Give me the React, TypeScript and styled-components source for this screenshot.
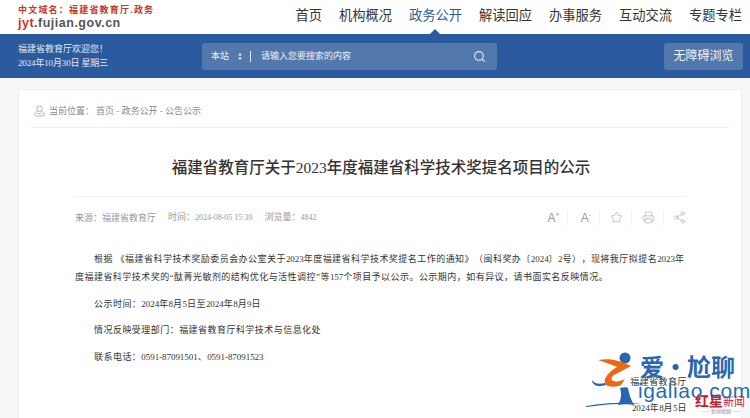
import React from "react";
import styled, { createGlobalStyle } from "styled-components";
import { Search, Star, Printer, Share2 } from "lucide-react";

const serif = `"Liberation Serif", "Noto Sans CJK SC", serif`;
const sans = `"Liberation Sans", "Noto Sans CJK SC", sans-serif`;

const Global = createGlobalStyle`
  html, body { margin: 0; padding: 0; background: #f6f7f8; }
  body { width: 750px; height: 418px; overflow: hidden; font-family: ${serif}; text-spacing-trim: space-all; }
  * { box-sizing: border-box; }
`;

const Page = styled.div`
  position: relative;
  width: 750px;
  height: 418px;
  overflow: hidden;
`;

const TopBar = styled.header`
  height: 34px;
  background: #fff;
  display: flex;
  align-items: flex-start;
  justify-content: space-between;
  padding: 4px 8px 0 18px;
`;

const Logo = styled.div`
  display: flex;
  flex-direction: column;
  margin-top: 1px;
`;

const LogoCn = styled.div`
  font: 700 9px/11px ${sans};
  color: #c8352b;
  letter-spacing: 1.2px;
`;

const LogoEn = styled.div`
  font: 700 12.5px/15px ${sans};
  color: #555;
  letter-spacing: 0.5px;
  b { color: #c8352b; }
`;

const Nav = styled.nav`
  display: flex;
  gap: 17px;
`;

const NavItem = styled.a<{ $active?: boolean }>`
  position: relative;
  display: block;
  height: 30px;
  font: 400 13.25px/24px ${serif};
  color: ${(p) => (p.$active ? "#2b5a9e" : "#333")};
  &::after {
    content: "";
    display: ${(p) => (p.$active ? "block" : "none")};
    position: absolute;
    left: 50%;
    bottom: 0;
    margin-left: -5px;
    border: 5px solid transparent;
    border-top: 0;
    border-bottom: 5px solid #2b5a9e;
  }
`;

const Band = styled.div`
  height: 44px;
  background: #2b5a9e;
  display: flex;
  align-items: center;
  padding: 0 7px 0 18px;
`;

const Welcome = styled.div`
  width: 184px;
  font: 400 9px/14.5px ${serif};
  color: #e4ebf5;
`;

const WelcomeDate = styled.div`
  letter-spacing: -0.15px;
`;

const SearchBox = styled.div`
  width: 295px;
  height: 27px;
  background: #5378ac;
  border-radius: 3px;
  display: flex;
  align-items: center;
  padding: 0 11px 0 9px;
  color: #eef2f8;
  font: 400 9px/12px ${serif};
`;

const Scope = styled.span`
  width: 27px;
`;

const Updown = styled.svg`
  width: 4px;
  height: 7px;
  margin-right: 8px;
`;

const Divider = styled.span`
  width: 1px;
  height: 11px;
  background: #e4ebf5;
  margin-right: 10px;
`;

const Hint = styled.span`
  flex: 1;
`;

const AccessBtn = styled.button`
  margin-left: auto;
  width: 79px;
  height: 27px;
  border: 0;
  border-radius: 3px;
  background: #5378ac;
  color: #eef2f8;
  font: 400 12px/27px ${serif};
  padding: 0;
`;

const Card = styled.main`
  margin: 11px 8px 0 18px;
  background: #fff;
  border: 1px solid #eef0f2;
  border-bottom: 0;
  height: 340px;
  padding: 0 12px;
`;

const Crumbs = styled.div`
  height: 38px;
  display: flex;
  align-items: center;
  border-bottom: 1px solid #eeeeee;
  padding: 5px 0 0 3px;
  font: 400 9px/12px ${serif};
  color: #8a8a8a;
`;

const CrumbIcon = styled.svg`
  width: 11px;
  height: 12px;
  margin-right: 4px;
`;

const CrumbLabel = styled.span`
  width: 47px;
`;

const Article = styled.article`
  padding: 0 42px 0 44px;
`;

const Title = styled.h1`
  margin: 0;
  height: 69px;
  border-bottom: 1px solid #f0f0f0;
  font: 500 15.5px/79px ${serif};
  color: #333;
  text-align: center;
  white-space: nowrap;
`;

const MetaRow = styled.div`
  height: 41px;
  display: flex;
  align-items: center;
  font: 400 9px/12px ${serif};
  color: #999;
`;

const MetaItem = styled.span`
  margin-right: 12px;
`;

const MetaNum = styled.span`
  font-size: 8px;
`;

const Tools = styled.div`
  margin-left: auto;
  display: flex;
  align-items: center;
  color: #9a9a9a;
`;

const Tool = styled.span<{ $first?: boolean; $text?: boolean }>`
  display: flex;
  align-items: center;
  justify-content: center;
  width: 32px;
  height: 14px;
  padding-left: ${(p) => (p.$text ? 5 : 2)}px;
  border-left: ${(p) => (p.$first ? "0" : "1px solid #f0f0f0")};
  font: 400 12px/14px ${sans};
  &:last-child {
    width: 24px;
    justify-content: flex-start;
    padding-left: 9px;
  }
  sup {
    font-size: 7px;
    line-height: 7px;
    align-self: flex-start;
  }
`;

const Body = styled.div`
  padding-top: 12px;
  font: 400 9px/18px ${serif};
  letter-spacing: 0.46px;
  color: #333;
`;

const Para = styled.p<{ $gap?: number }>`
  margin: 0 0 ${(p) => p.$gap ?? 8.5}px;
  text-indent: 19px;
`;

const Num = styled.span`
  letter-spacing: -0.05px;
`;

const Sign = styled.p<{ $gap?: number }>`
  margin: 0 0 ${(p) => p.$gap ?? 0}px;
  text-align: right;
`;

const Mark = styled.div`
  position: absolute;
  right: 0;
  bottom: 0;
  width: 230px;
  height: 78px;
  pointer-events: none;
`;

const MarkSvg = styled.svg`
  position: absolute;
  inset: 0;
`;

const MarkTitle = styled.span`
  position: absolute;
  left: 120px;
  top: 11px;
  font: 700 24px/30px "Noto Sans CJK SC", sans-serif;
  color: #2a66ad;
  word-spacing: -6px;
  white-space: nowrap;
`;

const MarkDomain = styled.span`
  position: absolute;
  left: 118px;
  top: 39px;
  font: 400 21px/24px "Liberation Sans", sans-serif;
  letter-spacing: 0.6px;
  color: #1c6fb6;
  white-space: nowrap;
`;

const RedMark = styled.span`
  position: absolute;
  left: 175px;
  top: 52px;
  font: 700 14px/17px "Noto Sans CJK SC", sans-serif;
  color: #c4202c;
  white-space: nowrap;
`;

const RedThin = styled.span`
  font: 400 11px/17px ${serif};
`;

const RedSub = styled.span`
  position: absolute;
  left: 176px;
  top: 67px;
  width: 50px;
  text-align: center;
  font: 400 5px/7px "Noto Sans CJK SC", sans-serif;
  color: #8a8f99;
  white-space: nowrap;
`;

const navItems = ["首页", "机构概况", "政务公开", "解读回应", "办事服务", "互动交流", "专题专栏"];

export default function App() {
  return (
    <Page>
      <Global />
      <TopBar>
        <Logo>
          <LogoCn>中文域名：福建省教育厅.政务</LogoCn>
          <LogoEn>
            <b>jyt</b>.fujian.gov.cn
          </LogoEn>
        </Logo>
        <Nav>
          {navItems.map((n) => (
            <NavItem key={n} $active={n === "政务公开"}>
              {n}
            </NavItem>
          ))}
        </Nav>
      </TopBar>
      <Band>
        <Welcome>
          <div>福建省教育厅欢迎您！</div>
          <WelcomeDate>2024年10月30日 星期三</WelcomeDate>
        </Welcome>
        <SearchBox>
          <Scope>本站</Scope>
          <Updown viewBox="0 0 4 7" fill="#eef2f8">
            <path d="M2 0l2 2.6H0zM2 7L0 4.4h4z" />
          </Updown>
          <Divider />
          <Hint>请输入您要搜索的内容</Hint>
          <Search size={13} color="#eef2f8" strokeWidth={2} />
        </SearchBox>
        <AccessBtn>无障碍浏览</AccessBtn>
      </Band>
      <Card>
        <Crumbs>
          <CrumbIcon viewBox="0 0 12 13" fill="none" stroke="#9a9a9a" strokeWidth="0.8">
            <circle cx="6" cy="4" r="3" />
            <path d="M4 6.6C2 7.4 1 8.6 1 10c0 1.2.8 2 2 2h6c1.2 0 2-.8 2-2 0-1.4-1-2.6-3-3.4" />
            <path d="M3.6 9.4h4.8" />
          </CrumbIcon>
          <CrumbLabel>当前位置：</CrumbLabel>
          <span>首页 - 政务公开 - 公告公示</span>
        </Crumbs>
        <Article>
          <Title>福建省教育厅关于2023年度福建省科学技术奖提名项目的公示</Title>
          <MetaRow>
            <MetaItem>来源：福建省教育厅</MetaItem>
            <MetaItem>
              时间：<MetaNum>2024-08-05 15:39</MetaNum>
            </MetaItem>
            <MetaItem>
              浏览量：<MetaNum>4842</MetaNum>
            </MetaItem>
            <Tools>
              <Tool $first $text>
                A<sup>+</sup>
              </Tool>
              <Tool $text>
                A<sup>-</sup>
              </Tool>
              <Tool>
                <Star size={13} strokeWidth={1} />
              </Tool>
              <Tool>
                <Printer size={13} strokeWidth={1} />
              </Tool>
              <Tool>
                <Share2 size={13} strokeWidth={1} />
              </Tool>
            </Tools>
          </MetaRow>
          <Body>
            <Para>
              根据 《福建省科学技术奖励委员会办公室关于<Num>2023</Num>年度福建省科学技术奖提名工作的通知》（闽科奖办〔<Num>2024</Num>〕<Num>2</Num>号），现将我厅拟提名<Num>2023</Num>年度福建省科学技术奖的“酞菁光敏剂的结构优化与活性调控”等<Num>157</Num>个项目予以公示。公示期内，如有异议，请书面实名反映情况。
            </Para>
            <Para>
              公示时间：<Num>2024</Num>年<Num>8</Num>月<Num>5</Num>日至<Num>2024</Num>年<Num>8</Num>月<Num>9</Num>日
            </Para>
            <Para>情况反映受理部门：福建省教育厅科学技术与信息化处</Para>
            <Para $gap={7.5}>
              联系电话：<Num>0591-87091501</Num>、<Num>0591-87091523</Num>
            </Para>
            <Sign $gap={8}>福建省教育厅</Sign>
            <Sign>
              <Num>2024</Num>年<Num>8</Num>月<Num>5</Num>日
            </Sign>
          </Body>
        </Article>
      </Card>
      <Mark>
        <MarkSvg width="230" height="78" viewBox="0 0 230 78">
          <circle cx="105" cy="18" r="5.5" fill="#2a66ad" />
          <path d="M78 20c7-1 14-1 20 1 5 1 9 3 13 5-5 3-12 6-17 9-3 2-3 5-1 6 4 1 8 0 12-2l-4 6c-3 2-9 2-13 1-4-2-4-6-2-9 2-4 6-7 11-10-6-3-13-5-19-7z" fill="#ea6a12" />
          <path d="M72 40c2 3 6 5 13 3l1 2c-4 1-8 2-11 0-2-1-3-3-3-5z" fill="#2a66ad" />
          <path d="M100 48c3-1 7-1 8 0 1 6 3 12 6 17-5-1-10-1-16 0 3-5 4-11 2-17z" fill="#2a66ad" />
          <path d="M66 66c12-2 30-4 48-3l8 1c-18-1-36 0-56 3z" fill="#2a66ad" />
        </MarkSvg>
        <MarkTitle>爱 · 尬聊</MarkTitle>
        <MarkDomain>igaliao.com</MarkDomain>
        <RedMark>
          红星<RedThin>新闻</RedThin>
        </RedMark>
        <RedSub>—— 新闻视频 ——</RedSub>
      </Mark>
    </Page>
  );
}
